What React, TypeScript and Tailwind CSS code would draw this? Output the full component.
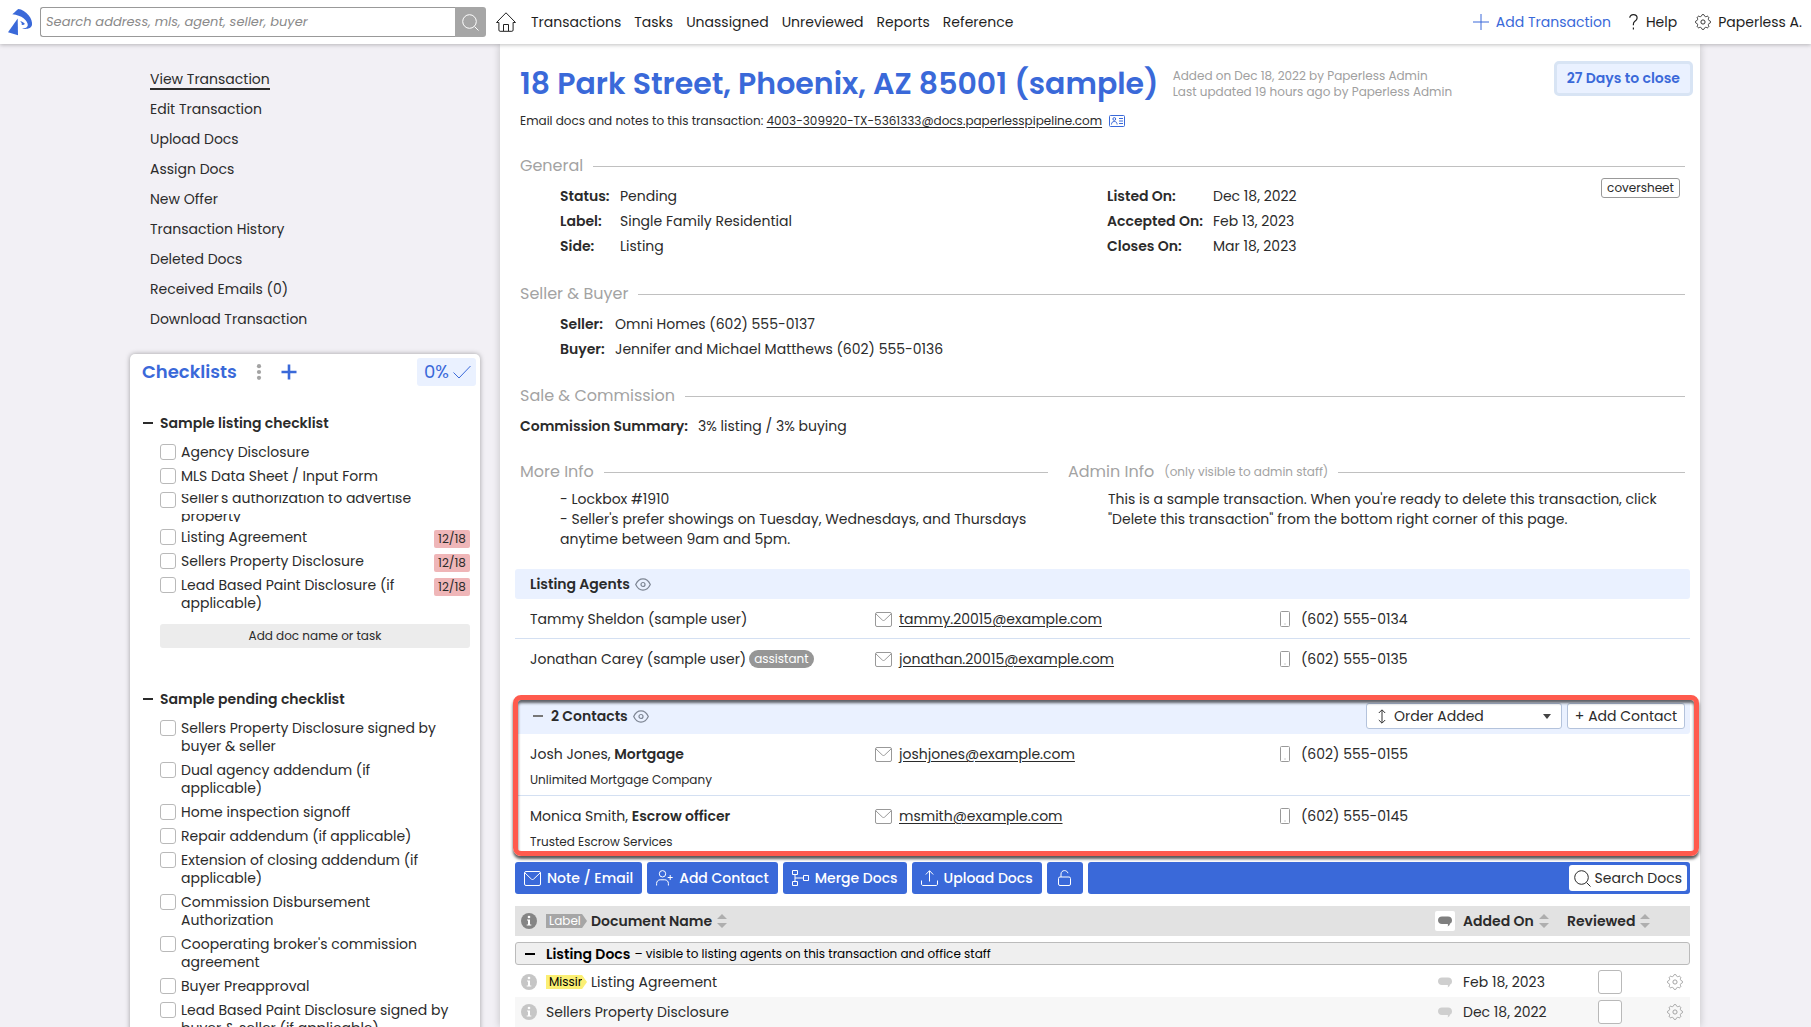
import type { ReactNode } from "react"

const navLinks = ["Transactions", "Tasks", "Unassigned", "Unreviewed", "Reports", "Reference"]

const sideLinks = [
  "View Transaction",
  "Edit Transaction",
  "Upload Docs",
  "Assign Docs",
  "New Offer",
  "Transaction History",
  "Deleted Docs",
  "Received Emails (0)",
  "Download Transaction"
]

type Item = { name: string; due?: string; clipped?: string[] }

const listingItems: Item[] = [
  { name: "Agency Disclosure" },
  { name: "MLS Data Sheet / Input Form" },
  { name: "Seller's authorization to advertise property", clipped: ["Seller's authorization to advertise", "property"] },
  { name: "Listing Agreement", due: "12/18" },
  { name: "Sellers Property Disclosure", due: "12/18" },
  { name: "Lead Based Paint Disclosure (if\napplicable)", due: "12/18" }
]

const pendingItems: Item[] = [
  { name: "Sellers Property Disclosure signed by\nbuyer & seller" },
  { name: "Dual agency addendum (if\napplicable)" },
  { name: "Home inspection signoff" },
  { name: "Repair addendum (if applicable)" },
  { name: "Extension of closing addendum (if\napplicable)" },
  { name: "Commission Disbursement\nAuthorization" },
  { name: "Cooperating broker's commission\nagreement" },
  { name: "Buyer Preapproval" },
  { name: "Lead Based Paint Disclosure signed by\nbuyer & seller (if applicable)" }
]

const agents = [
  { name: "Tammy Sheldon (sample user)", email: "tammy.20015@example.com", phone: "(602) 555-0134" },
  { name: "Jonathan Carey (sample user)", tag: "assistant", email: "jonathan.20015@example.com", phone: "(602) 555-0135" }
]

const contacts = [
  { name: "Josh Jones", role: "Mortgage", company: "Unlimited Mortgage Company", email: "joshjones@example.com", phone: "(602) 555-0155" },
  { name: "Monica Smith", role: "Escrow officer", company: "Trusted Escrow Services", email: "msmith@example.com", phone: "(602) 555-0145" }
]

const docs = [
  { name: "Listing Agreement", label: "Missing", added: "Feb 18, 2023" },
  { name: "Sellers Property Disclosure", added: "Dec 18, 2022" }
]

export default function App() {
  return (
    <div className="flex h-screen flex-col overflow-hidden bg-[#f2f0f5] font-[Poppins,Inter,sans-serif] text-sm text-[#2b2b2b]">
      <Header />
      <div className="flex min-h-0 flex-1 items-stretch gap-5 pl-[130px] pr-[111px]">
        <Sidebar />
        <Content />
      </div>
    </div>
  )
}

function Header() {
  return (
    <header className="relative z-10 flex h-11 shrink-0 items-center bg-white pl-2 pr-[9px] shadow-[0_1px_4px_rgba(0,0,0,0.25)]">
      <a href="#home" aria-label="Paperless Pipeline">
        <Logo />
      </a>
      <form className="ml-[7px] flex h-[30px] w-[446px]">
        <input
          type="text"
          aria-label="Search transactions"
          placeholder="Search address, mls, agent, seller, buyer"
          className="min-w-0 flex-1 rounded-l-[3px] border border-r-0 border-[#999] bg-white px-[5px] text-[13px] italic outline-none placeholder:text-[#8a8a8a]"
        />
        <button type="button" aria-label="Search" className="flex w-[31px] items-center justify-center rounded-r-[3px] bg-[#a6a6a6] text-white">
          <SearchIcon />
        </button>
      </form>
      <a href="#dashboard" aria-label="Home" className="ml-[10px] text-[#222]">
        <HomeIcon />
      </a>
      <nav className="ml-[15px] flex gap-[13px] text-[#1f1f1f]">
        {navLinks.map((link) => (
          <a key={link} href="#nav">{link}</a>
        ))}
      </nav>
      <div className="ml-auto flex items-center gap-[18px]">
        <a href="#add" className="flex items-center gap-[7px] text-[#3a69d9]">
          <svg width="16" height="16" viewBox="0 0 16 16" stroke="currentColor"><path d="M8 0v16M0 8h16" /></svg>
          Add Transaction
        </a>
        <a href="#help" className="flex items-center gap-2 text-[#1f1f1f]">
          <svg width="9" height="16" viewBox="0 0 9 16" fill="none" stroke="currentColor" strokeWidth="1.2">
            <path d="M.8 3.8C.8 1.8 2.4.7 4.3.7c2 0 3.8 1.2 3.8 3.3 0 1.6-1 2.4-2.2 3.3-1 .8-1.5 1.5-1.5 2.6v1.3M4.4 13.6v1.8" />
          </svg>
          Help
        </a>
        <a href="#account" className="flex items-center gap-[7px] text-[#1f1f1f]">
          <GearIcon />
          Paperless A.
        </a>
      </div>
    </header>
  )
}

function Sidebar() {
  return (
    <aside className="w-[350px] shrink-0 pt-5">
      <nav className="flex flex-col items-start pl-5">
        {sideLinks.map((link, i) => (
          <div key={link} className="flex h-[30px] items-center">
            <a href="#side" className={i === 0 ? "-mb-[2px] border-b-2 border-[#2b2b2b] leading-[18px]" : "leading-[18px]"}>{link}</a>
          </div>
        ))}
      </nav>

      <section className="mt-5 rounded-[5px] bg-white pb-10 shadow-[0_0_5px_rgba(0,0,0,0.35)]">
        <div className="flex items-center pl-3 pr-1 pt-1">
          <h2 className="text-lg font-semibold leading-7 text-[#3a69d9]">Checklists</h2>
          <button type="button" aria-label="Checklist options" className="ml-[19px] text-[#a3a3a3]">
            <svg width="6" height="16" viewBox="0 0 6 16" fill="currentColor">
              <circle cx="3" cy="2.2" r="2.1" /><circle cx="3" cy="8" r="2.1" /><circle cx="3" cy="13.8" r="2.1" />
            </svg>
          </button>
          <button type="button" aria-label="Add checklist" className="ml-[19px] text-[#3a69d9]">
            <svg width="16" height="16" viewBox="0 0 16 16" stroke="currentColor" strokeWidth="2.6"><path d="M8 .5v15M.5 8h15" /></svg>
          </button>
          <div className="ml-auto flex h-7 items-center gap-1 rounded-[3px] bg-[#eaf1ff] pl-[7px] pr-[5px] text-lg text-[#3a69d9]">
            0%
            <svg width="18" height="14" viewBox="0 0 18 14" fill="none" stroke="currentColor"><path d="M.5 7.5 6 13 17.5 1" /></svg>
          </div>
        </div>
        <Checklist title="Sample listing checklist" items={listingItems} className="mt-[27px]" />
        <div className="pl-[30px] pr-[10px] pt-[6px]">
          <button type="button" className="h-6 w-full rounded-[3px] bg-[#ececec] text-xs">Add doc name or task</button>
        </div>
        <Checklist title="Sample pending checklist" items={pendingItems} className="mt-[41px]" />
      </section>
    </aside>
  )
}

function Checklist({ title, items, className }: { title: string; items: Item[]; className: string }) {
  return (
    <div className={className}>
      <h3 className="flex items-center gap-[7px] pl-[13px] font-semibold leading-5">
        <span className="h-[2px] w-[10px] bg-[#2b2b2b]" />
        {title}
      </h3>
      <ul className="mt-[10px] pl-[30px] pr-[10px]">
        {items.map((item) => (
          <li key={item.name} className="flex items-start justify-between pb-[6px]">
            <label className="flex items-start gap-[5px] whitespace-pre leading-[18px]">
              <input type="checkbox" className="mt-px h-4 w-4 shrink-0 appearance-none rounded-[3px] border border-[#b9b9b9] bg-white" />
              {item.clipped ? (
                <span className="block pt-[3px]">
                  <span className="block h-[14px] overflow-hidden"><span className="-mt-[5px] block">{item.clipped[0]}</span></span>
                  <span className="mt-[6px] block h-2 overflow-hidden"><span className="-mt-[7px] block">{item.clipped[1]}</span></span>
                </span>
              ) : (
                item.name
              )}
            </label>
            {item.due && <span className="-mb-[2px] mt-[2px] h-[18px] w-9 rounded-[2px] bg-[#efb6b8] text-center text-xs leading-[18px]">{item.due}</span>}
          </li>
        ))}
      </ul>
    </div>
  )
}

function Content() {
  return (
    <main className="min-w-0 flex-1 bg-white pt-[17px] shadow-[0_0_8px_rgba(0,0,0,0.2)]">
      <div className="pl-5 pr-[15px]">
        <div className="-mr-2 flex items-start">
          <h1 className="text-3xl font-semibold leading-[46px] text-[#3a69d9]">18 Park Street, Phoenix, AZ 85001 (sample)</h1>
          <p className="ml-[14px] mt-[7px] text-xs leading-4 text-[#a0a0a0]">
            Added on Dec 18, 2022 by Paperless Admin
            <br />
            Last updated 19 hours ago by Paperless Admin
          </p>
          <div className="ml-auto h-[35px] rounded-[5px] border-[3px] border-[#d8e4f4] bg-[#eaf1ff] px-[10px] font-semibold leading-[29px] text-[#3a69d9]">
            27 Days to close
          </div>
        </div>
        <p className="mt-1 flex items-center text-xs leading-5">
          Email docs and notes to this transaction:&nbsp;
          <a href="#mail" className="underline underline-offset-2">4003-309920-TX-5361333@docs.paperlesspipeline.com</a>
          <a href="#card" aria-label="Contact card" className="ml-[7px] text-[#3a69d9]"><CardIcon /></a>
        </p>

        <Heading title="General" className="mt-[23px]" />
        <div className="grid grid-cols-[547fr_494fr_79px] items-start pl-10 pr-[5px]">
          <Fields width="w-[60px]" rows={[["Status:", "Pending"], ["Label:", "Single Family Residential"], ["Side:", "Listing"]]} />
          <Fields width="w-[106px]" rows={[["Listed On:", "Dec 18, 2022"], ["Accepted On:", "Feb 13, 2023"], ["Closes On:", "Mar 18, 2023"]]} />
          <button type="button" className="h-5 rounded-[3px] border border-[#999] text-xs leading-[18px]">coversheet</button>
        </div>

        <Heading title="Seller & Buyer" className="mt-[23px]" />
        <div className="pl-10">
          <Fields width="w-[55px]" rows={[["Seller:", "Omni Homes (602) 555-0137"], ["Buyer:", "Jennifer and Michael Matthews (602) 555-0136"]]} />
        </div>

        <Heading title="Sale & Commission" className="mt-[22px]" />
        <Fields width="w-[178px]" rows={[["Commission Summary:", "3% listing / 3% buying"]]} />

        <div className="mt-[21px] grid grid-cols-[528fr_617fr] gap-5 leading-5">
          <div>
            <Heading title="More Info" />
            <p className="mt-[5px] pl-10">
              - Lockbox #1910
              <br />
              - Seller's prefer showings on Tuesday, Wednesdays, and Thursdays anytime between 9am and 5pm.
            </p>
          </div>
          <div>
            <Heading title="Admin Info" note="(only visible to admin staff)" />
            <p className="mt-[5px] pl-10">
              This is a sample transaction. When you're ready to delete this transaction, click "Delete this transaction" from the bottom right corner of this page.
            </p>
          </div>
        </div>
      </div>

      <div className="pl-[15px] pr-[10px]">
        <section className="mt-5">
          <h2 className="flex h-[30px] items-center gap-[5px] rounded-[3px] bg-[#eaf1ff] pl-[15px] font-semibold">
            Listing Agents <EyeIcon />
          </h2>
          {agents.map((agent, i) => (
            <div key={agent.email} className={`grid h-10 grid-cols-[360fr_405fr_410fr] pt-[9px] leading-[22px] ${i === 0 ? "border-b border-[#d4e0f2]" : ""}`}>
              <div className="flex items-start gap-[3px] pl-[15px]">
                {agent.name}
                {agent.tag && <span className="mt-[2px] rounded-full bg-[#969696] px-[5px] text-xs leading-[18px] text-white">{agent.tag}</span>}
              </div>
              <EmailCell email={agent.email} />
              <PhoneCell phone={agent.phone} />
            </div>
          ))}
        </section>

        <section className="relative mt-5">
          <div className="flex h-[35px] items-center rounded-[3px] bg-[#eaf1ff] pb-px pl-[18px] pr-[5px]">
            <span className="h-[2px] w-[10px] bg-[#777]" />
            <h2 className="ml-2 mr-[5px] font-semibold">2 Contacts</h2>
            <EyeIcon />
            <div className="ml-auto flex h-[26px] w-[196px] items-center rounded-[3px] border border-[#b4c3dc] bg-white pl-[11px] pr-[10px]">
              <svg width="8" height="15" viewBox="0 0 8 15" fill="none" stroke="#333"><path d="M4 1v13M.8 4 4 .8 7.2 4M.8 11 4 14.2 7.2 11" /></svg>
              <select aria-label="Sort contacts" className="ml-2 flex-1 appearance-none bg-transparent leading-5 outline-none">
                <option>Order Added</option>
              </select>
              <svg width="8" height="5" viewBox="0 0 8 5" fill="#444"><path d="M0 0h8L4 5z" /></svg>
            </div>
            <button type="button" className="ml-[5px] h-[26px] w-[118px] whitespace-nowrap rounded-[3px] border border-[#b4c3dc] bg-white leading-6">
              + Add Contact
            </button>
          </div>
          {contacts.map((c, i) => (
            <div key={c.email} className={`grid h-[62px] grid-cols-[360fr_405fr_410fr] pt-[9px] leading-[22px] ${i === 0 ? "border-b border-[#d4e0f2]" : ""}`}>
              <div className="pl-[15px]">
                <p>{c.name}, <b className="font-semibold">{c.role}</b></p>
                <p className="mt-[5px] text-xs leading-5">{c.company}</p>
              </div>
              <EmailCell email={c.email} />
              <PhoneCell phone={c.phone} />
            </div>
          ))}
          {/* highlight frame drawn over the contacts block */}
          <div className="pointer-events-none absolute -left-[2px] -right-[9px] -top-1 bottom-[2px] rounded-[8px] border-[5px] border-[#ff5a4d] shadow-[0_3px_3px_rgba(0,0,0,0.65),inset_0_3px_3px_rgba(0,0,0,0.6)]" />
        </section>

        <div className="mt-1 flex h-8 gap-[5px]">
          <ToolButton icon={<MailIcon />}>Note / Email</ToolButton>
          <ToolButton icon={<UserPlusIcon />}>Add Contact</ToolButton>
          <ToolButton icon={<MergeIcon />}>Merge Docs</ToolButton>
          <ToolButton icon={<UploadIcon />}>Upload Docs</ToolButton>
          <button type="button" aria-label="Unlock" className="flex w-9 items-center justify-center rounded-[3px] bg-[#3a69d9] text-white">
            <LockIcon />
          </button>
          <div className="flex flex-1 items-center justify-end rounded-[3px] bg-[#3a69d9] pr-[3px]">
            <button type="button" className="flex h-[26px] items-center gap-1 rounded-[3px] bg-white px-[5px]">
              <SearchIcon /> Search Docs
            </button>
          </div>
        </div>

        <DocTable />
      </div>
    </main>
  )
}

function Heading({ title, note, className = "" }: { title: string; note?: string; className?: string }) {
  return (
    <h2 className={`flex items-center text-base leading-6 text-[#a3a3a3] ${className}`}>
      {title}
      {note && <span className="ml-[10px] text-xs">{note}</span>}
      <span className="ml-[10px] h-px flex-1 bg-[#c0c0c0]" />
    </h2>
  )
}

function Fields({ rows, width }: { rows: string[][]; width: string }) {
  return (
    <dl className="pt-[6px] leading-[25px]">
      {rows.map(([label, value]) => (
        <div key={label} className="flex">
          <dt className={`shrink-0 font-semibold ${width}`}>{label}</dt>
          <dd>{value}</dd>
        </div>
      ))}
    </dl>
  )
}

function EmailCell({ email }: { email: string }) {
  return (
    <div className="flex items-center gap-[7px] self-start">
      <span className="text-[#999]"><MailIcon /></span>
      <a href="#mail" className="underline underline-offset-2">{email}</a>
    </div>
  )
}

function PhoneCell({ phone }: { phone: string }) {
  return (
    <div className="flex items-center gap-[11px] self-start">
      <svg width="10" height="16" viewBox="0 0 10 16" fill="none" stroke="#999">
        <rect x=".5" y=".5" width="9" height="15" rx="1" />
        <path d="M4.5 13h1" />
      </svg>
      {phone}
    </div>
  )
}

function ToolButton({ icon, children }: { icon: ReactNode; children: ReactNode }) {
  return (
    <button type="button" className="flex items-center gap-[6px] whitespace-nowrap rounded-[3px] bg-[#3a69d9] px-[9px] font-medium text-white">
      {icon}
      {children}
    </button>
  )
}

function DocTable() {
  return (
    <table className="mt-3 w-full table-fixed border-collapse text-left">
      <colgroup>
        <col className="w-[31px]" />
        <col />
        <col className="w-[33px]" />
        <col className="w-[104px]" />
        <col className="w-[86px]" />
        <col className="w-[37px]" />
      </colgroup>
      <thead>
        <tr className="h-[30px] bg-[#e2e2e2]">
          <th className="pl-[6px]"><InfoIcon color="#858585" /></th>
          <th className="font-semibold">
            <span className="flex items-center">
              <Tag text="Label" color="bg-[#a6a6a6] text-white" />
              Document Name
              <SortIcon />
            </span>
          </th>
          <th>
            <span className="ml-[5px] flex h-5 w-5 items-center justify-center rounded-[2px] bg-white"><BubbleIcon color="#7f7f7f" /></span>
          </th>
          <th className="font-semibold"><span className="flex items-center">Added On<SortIcon /></span></th>
          <th className="font-semibold"><span className="flex items-center">Reviewed<SortIcon /></span></th>
          <th />
        </tr>
      </thead>
      <tbody>
        <tr>
          <td colSpan={6} className="pb-[2px] pt-[6px]">
            <button type="button" className="flex h-[23px] w-full items-center rounded-[3px] border border-[#bbb] bg-[#efefef] pl-[9px] text-xs text-black">
              <span className="mr-[11px] h-[2px] w-[10px] bg-black" />
              <b className="mr-1 text-sm font-semibold">Listing Docs</b>– visible to listing agents on this transaction and office staff
            </button>
          </td>
        </tr>
        {docs.map((doc) => (
          <tr key={doc.name} className="h-[30px] even:bg-white odd:bg-[#f7f7f7]">
            <td className="pl-[6px]"><InfoIcon color="#c6c6c6" /></td>
            <td>
              <span className="flex items-center">
                {doc.label && <Tag text={doc.label} color="bg-[#fbef74] text-black" />}
                {doc.name}
              </span>
            </td>
            <td className="pl-2"><BubbleIcon color="#cfcfcf" /></td>
            <td>{doc.added}</td>
            <td>
              <input type="checkbox" aria-label={`${doc.name} reviewed`} className="mx-auto block h-6 w-6 appearance-none rounded-[3px] border border-[#b9b9b9] bg-white" />
            </td>
            <td>
              <button type="button" aria-label={`${doc.name} settings`} className="ml-[14px] block text-[#999]">
                <GearIcon />
              </button>
            </td>
          </tr>
        ))}
      </tbody>
    </table>
  )
}

// label chip with a pointed right edge
function Tag({ text, color }: { text: string; color: string }) {
  return (
    <span className={`mr-1 block h-[14px] w-[41px] shrink-0 pl-[3px] pr-[5px] text-xs font-normal leading-[14px] [clip-path:polygon(0_0,88%_0,100%_50%,88%_100%,0_100%)] ${color}`}>
      <span className="block overflow-hidden">{text}</span>
    </span>
  )
}

function Logo() {
  return (
    <svg width="25" height="28" viewBox="0 0 25 28" fill="#3a69d9">
      <path d="M4.3 6.2C7 4.6 8.6 2 10.3 1c3.4.2 7.6 2.8 10.5 6.4 2.4 3.1 3.6 6.5 3.2 9.4-.5 3.5-4.5 4.8-10 3.9 3.3-.3 5.7-1.5 5.8-3.5C20 12.6 13.5 7 4.3 6.2z" />
      <path d="M9.7 10.5 0 24.3l10 3z" />
      <path d="M12.2 13.2c1.9.3 3.9 1.3 4.6 2.6-.4 1.1-1.7 1.5-2.8.9-1-.6-.7-1.4.2-1.5-.7-.5-1.5-1.1-2-2z" />
    </svg>
  )
}

// eight rounded teeth around a small hub
const gearOutline = Array.from({ length: 96 }, (_, i) => {
  const a = (i / 96) * Math.PI * 2
  const r = 6.7 + 0.8 * Math.tanh(2 * Math.cos(8 * a))
  return `${i ? "L" : "M"}${(8 + r * Math.sin(a)).toFixed(2)} ${(8 - r * Math.cos(a)).toFixed(2)}`
}).join("") + "z"

function GearIcon() {
  return (
    <svg width="16" height="16" viewBox="0 0 16 16" fill="none" stroke="currentColor" strokeWidth=".9" strokeLinejoin="round">
      <path d={gearOutline} />
      <circle cx="8" cy="8" r="2.100" />
    </svg>
  )
}

function HomeIcon() {
  return (
    <svg width="20" height="20" viewBox="0 0 20 20" fill="none" stroke="currentColor" strokeLinejoin="round">
      <path d="M.5 10.5 10 .8l9.500 9.700h-2.400V18c0 .8-.4 1.300-1.200 1.300H4.100c-.8 0-1.200-.5-1.200-1.300v-7.500z" />
      <path d="M7.500 19v-6.500h5V19" />
    </svg>
  )
}

function SearchIcon() {
  return (
    <svg width="17" height="17" viewBox="0 0 17 17" fill="none" stroke="currentColor">
      <circle cx="7.500" cy="7.500" r="6.800" />
      <path d="m12.500 12.500 4 4" />
    </svg>
  )
}

function MailIcon() {
  return (
    <svg width="17" height="15" viewBox="0 0 17 15" fill="none" stroke="currentColor">
      <rect x=".5" y=".5" width="16" height="14" rx="1.500" />
      <path d="m1 2 6.300 6c.7.700 1.700.700 2.400 0L16 2" />
    </svg>
  )
}

function UserPlusIcon() {
  return (
    <svg width="17" height="16" viewBox="0 0 17 16" fill="none" stroke="currentColor">
      <circle cx="6.500" cy="3.800" r="3.200" />
      <path d="M.6 15.500v-2c0-2.200 1.600-3.700 3.600-3.700h4.600c2 0 3.600 1.500 3.600 3.700v2M14.200 5v5M11.700 7.500h5" />
    </svg>
  )
}

function MergeIcon() {
  return (
    <svg width="17" height="16" viewBox="0 0 17 16" fill="none" stroke="currentColor">
      <path d="M.5.500h5v4h-5zM.5 11.500h5v4h-5zM11.500 5.500h5v5h-5zM3 4.500v7M3 8h8.500" />
    </svg>
  )
}

function UploadIcon() {
  return (
    <svg width="17" height="16" viewBox="0 0 17 16" fill="none" stroke="currentColor">
      <path d="M8.500 11.500V.8M4.800 4.500l3.700-3.800 3.700 3.800M.5 10.500V14c0 .9.600 1.500 1.500 1.500h13c.9 0 1.500-.6 1.500-1.500v-3.500" />
    </svg>
  )
}

function LockIcon() {
  return (
    <svg width="13" height="16" viewBox="0 0 13 16" fill="none" stroke="currentColor">
      <rect x=".5" y="7" width="12" height="8.500" rx="1.500" />
      <path d="M3 7V4c0-2 1.500-3.400 3.500-3.400 1.700 0 3.100 1 3.400 2.600" />
    </svg>
  )
}

function EyeIcon() {
  return (
    <svg width="16" height="13" viewBox="0 0 16 13" fill="none" stroke="#7d8593" strokeWidth="1.200">
      <path d="M.7 6.500C2.200 3.300 4.900.9 8 .9s5.800 2.400 7.300 5.600c-1.500 3.200-4.200 5.600-7.300 5.600S2.200 9.700.7 6.500z" />
      <circle cx="8" cy="6.500" r="2" />
    </svg>
  )
}

function CardIcon() {
  return (
    <svg width="16" height="12" viewBox="0 0 16 12" fill="none" stroke="currentColor">
      <rect x=".5" y=".5" width="15" height="11" rx="1" />
      <circle cx="5.300" cy="4" r="1.400" />
      <path d="M2.500 9.500c0-2 1-3 2.800-3s2.800 1 2.800 3M10 3.500h4M10 6h4M10 8.500h4" />
    </svg>
  )
}

function InfoIcon({ color }: { color: string }) {
  return (
    <svg width="16" height="16" viewBox="0 0 16 16">
      <circle cx="8" cy="8" r="8" fill={color} />
      <circle cx="8" cy="4" r="1.300" fill="#fff" />
      <path d="M6 6.500h3v5h1.300v1H5.700v-1H7v-4H6z" fill="#fff" />
    </svg>
  )
}

function BubbleIcon({ color }: { color: string }) {
  return (
    <svg width="14" height="11" viewBox="0 0 14 11" fill={color}>
      <path d="M4 .5h6c2.500 0 4 1.500 4 3.700 0 1.700-.7 2.900-2 3.400.1 1.100-.9 2.300-2.400 2.900.5-.9.500-1.700.2-2.500H4C1.500 8 0 6.500 0 4.200 0 2 1.500.5 4 .5z" />
    </svg>
  )
}

function SortIcon() {
  return (
    <svg className="ml-[5px] shrink-0" width="10" height="14" viewBox="0 0 10 14" fill="#aeaeae">
      <path d="M5 0l5 5H0zM5 14l5-5H0z" />
    </svg>
  )
}
